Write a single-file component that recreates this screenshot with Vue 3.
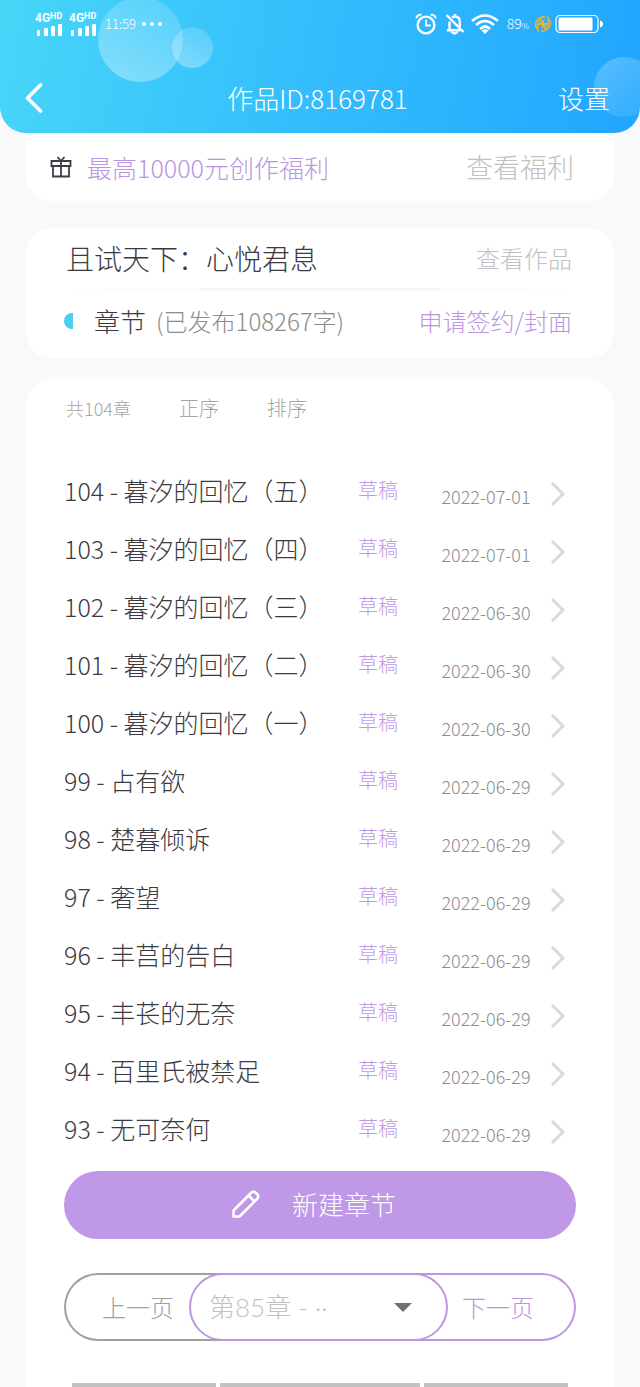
<script setup>
import { ref } from 'vue'

const chapters = [
  { no: 104, name: '暮汐的回忆（五）', date: '2022-07-01' },
  { no: 103, name: '暮汐的回忆（四）', date: '2022-07-01' },
  { no: 102, name: '暮汐的回忆（三）', date: '2022-06-30' },
  { no: 101, name: '暮汐的回忆（二）', date: '2022-06-30' },
  { no: 100, name: '暮汐的回忆（一）', date: '2022-06-30' },
  { no: 99, name: '占有欲', date: '2022-06-29' },
  { no: 98, name: '楚暮倾诉', date: '2022-06-29' },
  { no: 97, name: '奢望', date: '2022-06-29' },
  { no: 96, name: '丰莒的告白', date: '2022-06-29' },
  { no: 95, name: '丰苌的无奈', date: '2022-06-29' },
  { no: 94, name: '百里氏被禁足', date: '2022-06-29' },
  { no: 93, name: '无可奈何', date: '2022-06-29' }
]
const page = ref('85')
</script>

<template>
  <div class="page">
    <header class="header">
      <span class="bubble bubble-large"></span>
      <span class="bubble bubble-small"></span>
      <span class="bubble bubble-right"></span>

      <div class="status">
        <div v-for="sim in 2" :key="sim" class="sim">
          <span class="net">4G<span class="hd">HD</span></span>
          <svg width="28" height="12" viewBox="0 0 28 12" fill="#fff">
            <rect x="2" y="6" width="3" height="6" rx="1" />
            <rect x="9" y="4" width="4" height="8" rx="1" />
            <rect x="16" y="2" width="4" height="10" rx="1" />
            <rect x="23" y="0" width="4" height="12" rx="1" />
          </svg>
        </div>
        <span class="time">11:59</span>
        <svg class="more" width="22" height="6" viewBox="0 0 22 6" fill="#fff">
          <circle cx="3" cy="3" r="2" /><circle cx="11" cy="3" r="2" /><circle cx="19" cy="3" r="2" />
        </svg>
        <div class="status-right">
          <svg width="22" height="22" viewBox="0 0 22 22" fill="none" stroke="#fff" stroke-width="2.400" stroke-linecap="round">
            <circle cx="11" cy="12" r="8.400" />
            <path d="M11 7.500v5h4" stroke-width="2" />
            <path d="M1.500 4.500Q2.500 2 5.500 1.800M20.500 4.500Q19.500 2 16.500 1.800" stroke-width="2" />
          </svg>
          <svg class="bell" width="20" height="22" viewBox="0 0 20 22" fill="none" stroke="#fff" stroke-width="2.400">
            <path d="M4.500 17V8.500M7 4.500Q8.500 3.500 10 3.500Q14.800 3.500 14.800 9V14M2 17.200H15.500" />
            <path d="M6.500 18.500Q9.500 22.500 12.500 18.500" />
            <path d="M10 1V4" />
            <path d="M1.500 2L18.500 19" />
          </svg>
          <svg class="wifi" width="28" height="20" viewBox="0 0 28 20" fill="none" stroke="#fff" stroke-width="2.600">
            <path d="M1 7Q14 -4 27 7" />
            <path d="M5 11Q14 3 23 11" />
            <path d="M9 15Q14 10 19 15" />
            <path d="M10.500 16.500Q14 13.500 17.500 16.500L14 20Z" fill="#fff" stroke="none" />
          </svg>
          <span class="percent">89<span class="sign">%</span></span>
          <svg class="charge" width="18" height="18" viewBox="0 0 18 18" fill="none" stroke="#dcb14c" stroke-width="1.800">
            <path d="M11 1.500Q3 3 1.500 9Q1.500 12 3 13.500M4.500 16.500Q1.500 9 8 4.500M7 16.500Q15 15 16.500 9Q16.500 6 15 4.500M13.500 1.500Q16.500 9 10 13.500" />
            <path d="M11 3.500L4.500 10H8.500L7 14.500L13.500 8H9.500Z" fill="#ffb61e" stroke="none" />
          </svg>
          <svg width="49" height="20" viewBox="0 0 49 20" fill="none">
            <rect x="1" y="1.500" width="42" height="17" rx="4" stroke="#fff" stroke-width="1.200" />
            <rect x="3.500" y="3.500" width="34" height="13" rx="1.500" fill="#fff" />
            <path d="M45 6.500Q48 7.500 48 10T45 13.500Z" fill="#fff" />
          </svg>
        </div>
      </div>

      <div class="nav">
        <button class="back" type="button" aria-label="返回">
          <svg width="18" height="30" viewBox="0 0 18 30" fill="none" stroke="#fff" stroke-width="3.600" stroke-linecap="round" stroke-linejoin="round">
            <path d="M15.500 2L2.500 15L15.500 28" />
          </svg>
        </button>
        <h1 class="title">作品ID:8169781</h1>
        <button class="settings" type="button">设置</button>
      </div>
    </header>

    <main>
      <section class="card welfare">
        <svg width="22" height="22" viewBox="0 0 22 22" fill="none" stroke="#3d3d45" stroke-width="1.800">
          <path d="M1.500 5H20.500V10H1.500ZM3 10V20.500H19V10M11 5V20.500M7.500 1L11 5L14.500 1" />
        </svg>
        <span class="welfare-text">最高10000元创作福利</span>
        <a class="muted" href="#">查看福利</a>
      </section>

      <section class="card work">
        <div class="work-row">
          <h2 class="work-name">且试天下：心悦君息</h2>
          <a class="muted small" href="#">查看作品</a>
        </div>
        <div class="divider"></div>
        <div class="work-row">
          <span class="half"></span>
          <h3 class="section-name">章节</h3>
          <span class="words">(已发布108267字)</span>
          <a class="apply" href="#">申请签约/封面</a>
        </div>
      </section>

      <section class="card list-card">
        <div class="meta">
          <span class="total">共104章</span>
          <button type="button">正序</button>
          <button type="button">排序</button>
        </div>

        <ul class="chapters">
          <li v-for="c in chapters" :key="c.no">
            <a class="chapter" href="#">
              <span class="name">{{ c.no }} - {{ c.name }}</span>
              <span class="draft">草稿</span>
              <time class="date">{{ c.date }}</time>
              <svg class="arrow" width="16" height="24" viewBox="0 0 16 24" fill="none" stroke="#dadada" stroke-width="3">
                <path d="M2 1L13 12L2 23" />
              </svg>
            </a>
          </li>
        </ul>

        <button class="create" type="button">
          <svg width="28" height="28" viewBox="0 0 28 28" fill="none" stroke="#fff" stroke-width="2.600" stroke-linejoin="round">
            <path d="M1.500 26.500V20.500L19 3Q21.500 0.500 24 3L25 4Q27.500 6.500 25 9L7.500 26.500ZM16.500 5.500L22.500 11.500" />
          </svg>
          <span>新建章节</span>
        </button>

        <nav class="pager">
          <button class="prev" type="button">上一页</button>
          <div class="picker">
            <select v-model="page" aria-label="选择章节">
              <option value="85">第85章 - ··</option>
            </select>
            <svg class="caret" width="18" height="9" viewBox="0 0 18 9" fill="#707070"><path d="M0 0H18L9 9Z" /></svg>
          </div>
          <button class="next" type="button">下一页</button>
        </nav>

        <div class="system-bar"><span></span><span></span><span></span></div>
      </section>
    </main>
  </div>
</template>

<style>
body {
  background: #f9f9f9;
}
</style>

<style scoped>
.page {
  font-family: "Noto Sans CJK SC", sans-serif;
  font-weight: 300;
  font-size: 26px;
  line-height: 36px;
  color: #3a3a40;
}
.page * {
  box-sizing: border-box;
}
h1, h2, h3, ul {
  margin: 0;
  padding: 0;
  font-weight: inherit;
  list-style: none;
}
h3 {
  font-size: 26px;
}
a {
  color: inherit;
  text-decoration: none;
}
button, select {
  font: inherit;
  color: inherit;
  background: none;
  border: 0;
  padding: 0;
  cursor: pointer;
}
svg {
  display: block;
  flex: none;
}

.header {
  position: relative;
  overflow: hidden;
  height: 133px;
  border-radius: 0 0 26px 26px;
  background: linear-gradient(100deg, #48d6f8 0%, #35bffc 45%, #20a6ff 100%);
  color: #fff;
}
.bubble {
  position: absolute;
  border-radius: 50%;
  background: linear-gradient(200deg, rgba(255, 255, 255, 0.12), rgba(255, 255, 255, 0.36));
}
.bubble-large {
  left: 98px;
  top: -3px;
  width: 85px;
  height: 85px;
}
.bubble-small {
  left: 172px;
  top: 27px;
  width: 41px;
  height: 41px;
}
.bubble-right {
  right: -14px;
  top: 57px;
  width: 60px;
  height: 60px;
  background: linear-gradient(320deg, rgba(255, 255, 255, 0.06), rgba(255, 255, 255, 0.24));
}
.status {
  position: relative;
  display: flex;
  align-items: center;
  height: 48px;
  padding: 0 36px 0 35px;
}
.sim {
  width: 28px;
  margin-right: 6px;
}
.net {
  display: flex;
  font: bold 12px/11px Roboto, "Liberation Sans", sans-serif;
}
.hd {
  font-size: 9px;
  line-height: 7px;
}
.time {
  margin-left: 2px;
  font-size: 13px;
  line-height: 20px;
}
.more {
  margin-left: 5px;
}
.status-right {
  display: flex;
  align-items: center;
  margin-left: auto;
}
.bell {
  margin-left: 8px;
}
.wifi {
  margin-left: 6px;
}
.percent {
  margin-left: 8px;
  font-size: 14px;
  line-height: 20px;
}
.sign {
  font-size: 8px;
}
.charge {
  margin: 0 3px 0 5px;
}
.nav {
  position: relative;
  display: grid;
  grid-template-columns: 1fr auto 1fr;
  align-items: center;
  height: 70px;
  margin-top: 15px;
  padding: 0 30px 0 25px;
}
.back {
  justify-self: start;
}
.title {
  font-size: 26px;
  line-height: 36px;
}
.settings {
  justify-self: end;
}

.card {
  margin: 0 26px;
  background: #fff;
}
.welfare {
  display: flex;
  align-items: center;
  height: 68px;
  padding: 0 40px 0 24px;
  border-radius: 0 0 26px 26px;
}
.welfare-text {
  margin-left: 15px;
  font-size: 25px;
  color: #bb95e2;
}
.muted {
  margin-left: auto;
  font-size: 27px;
  color: #c2c2c2;
}
.small {
  font-size: 24px;
}
.work {
  margin-top: 27px;
  padding: 0 42px 7px 38px;
  border-radius: 26px;
}
.work-row {
  display: flex;
  align-items: center;
  height: 60px;
}
.work-name {
  padding-left: 2px;
  font-size: 28px;
}
.divider {
  height: 3px;
  background: linear-gradient(90deg, transparent, #f8f8f8 30%, #f8f8f8 70%, transparent);
}
.half {
  width: 9px;
  height: 16px;
  margin-right: 21px;
  border-radius: 9px 0 0 9px;
  background: #49cef6;
}
.words {
  margin-left: 10px;
  font-size: 24px;
  color: #8c8c8c;
}
.apply {
  margin-left: auto;
  font-size: 24px;
  color: #bb95e2;
}

.list-card {
  margin-top: 21px;
  padding: 13px 38px 0;
  border-radius: 26px 26px 0 0;
}
.meta {
  display: flex;
  gap: 48px;
  padding-left: 2px;
  font-size: 20px;
  line-height: 32px;
  color: #a6a6a6;
}
.total {
  font-size: 18px;
}
.chapters {
  margin-top: 37px;
}
.chapter {
  display: grid;
  grid-template-columns: 1fr 64px 92px 16px;
  column-gap: 18px;
  align-items: center;
  height: 58px;
  padding-right: 10px;
}
.name {
  font-size: 25px;
  white-space: nowrap;
}
.draft {
  font-size: 20px;
  color: #bf9be4;
}
.date {
  padding-top: 12px;
  font-size: 18px;
  text-align: center;
  white-space: nowrap;
  color: #8c8c8c;
}
.arrow {
  margin-top: 8px;
}
.create {
  display: flex;
  align-items: center;
  justify-content: center;
  gap: 32px;
  width: 100%;
  height: 68px;
  margin-top: 14px;
  padding: 0 12px 2px 0;
  border-radius: 34px;
  background: #bf98e8;
  color: #fff;
}
.pager {
  display: grid;
  grid-template-columns: 1fr 2fr 1fr;
  height: 68px;
  margin-top: 34px;
  font-size: 24px;
}
.prev, .next {
  text-align: left;
}
.prev {
  margin-right: -34px;
  padding-left: 36px;
  border: 2px solid #a0a0a0;
  border-right: 0;
  border-radius: 34px 0 0 34px;
  color: #a0a0a0;
}
.picker {
  position: relative;
  margin-left: -3px;
  border: 2px solid #bb98e0;
  border-radius: 34px;
  background: #fff;
}
.picker select {
  width: 100%;
  height: 100%;
  padding: 0 50px 0 18px;
  border-radius: 34px;
  appearance: none;
  font-family: Lato, "Noto Sans CJK SC", sans-serif;
  font-size: 26px;
  color: #c2c2c2;
}
.caret {
  position: absolute;
  right: 34px;
  top: 28px;
  pointer-events: none;
}
.next {
  margin-left: -34px;
  padding-left: 48px;
  border: 2px solid #bb98e0;
  border-left: 0;
  border-radius: 0 34px 34px 0;
  color: #bb95e2;
}
.system-bar {
  display: grid;
  grid-template-columns: 145fr 200fr 145fr;
  gap: 4px;
  margin: 42px 8px 0;
}
.system-bar span {
  height: 4px;
  background: #c2c2c2;
}
</style>
